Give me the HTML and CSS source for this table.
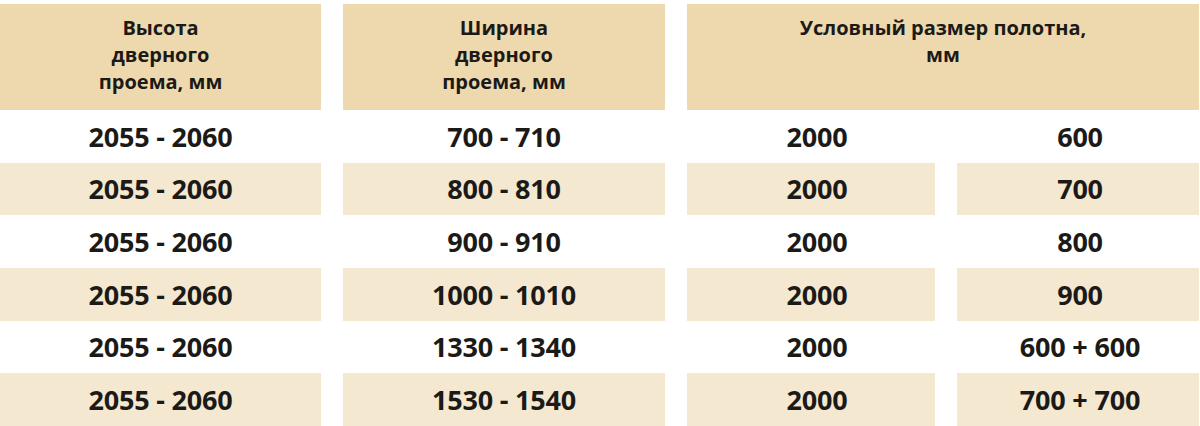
FILE: index.html
```html
<!DOCTYPE html>
<html lang="ru">
<head>
<meta charset="utf-8">
<title>Размеры дверных проемов</title>
<link rel="stylesheet" href="styles.css">
</head>
<body>
<div class="table">
  <div class="head c1">Высота<br>дверного<br>проема, мм</div>
  <div class="head c2">Ширина<br>дверного<br>проема, мм</div>
  <div class="head c3">Условный размер полотна,<br>мм</div>

  <div class="cell">2055 - 2060</div><div class="cell">700 - 710</div><div class="cell n3a">2000</div><div class="cell n3b">600</div>
  <div class="cell alt">2055 - 2060</div><div class="cell alt">800 - 810</div><div class="cell alt n3a">2000</div><div class="cell alt n3b">700</div>
  <div class="cell">2055 - 2060</div><div class="cell">900 - 910</div><div class="cell n3a">2000</div><div class="cell n3b">800</div>
  <div class="cell alt">2055 - 2060</div><div class="cell alt">1000 - 1010</div><div class="cell alt n3a">2000</div><div class="cell alt n3b">900</div>
  <div class="cell">2055 - 2060</div><div class="cell">1330 - 1340</div><div class="cell n3a">2000</div><div class="cell n3b">600 + 600</div>
  <div class="cell alt">2055 - 2060</div><div class="cell alt">1530 - 1540</div><div class="cell alt n3a">2000</div><div class="cell alt n3b">700 + 700</div>
</div>
</body>
</html>
```
FILE: styles.css
```css
html, body {
  margin: 0;
  padding: 0;
  background: #ffffff;
}
body {
  padding-top: 4px;
  font-family: "Open Sans", "Noto Sans", "DejaVu Sans", sans-serif;
  color: #1c1a17;
  font-weight: 700;
}
.table {
  display: grid;
  width: 1199px;
  height: 422px;
  grid-template-columns: 321px 322px 248px 1fr;
  grid-template-rows: 106px repeat(6, 1fr);
  column-gap: 22px;
}
.head {
  background: #eed8ae;
  font-size: 20px;
  line-height: 27px;
  text-align: center;
  padding-top: 10px;
  box-sizing: border-box;
}
.c3 {
  grid-column: 3 / 5;
}
.cell {
  display: flex;
  align-items: center;
  justify-content: center;
  font-size: 27px;
  letter-spacing: -0.2px;
}
.alt {
  background: #f4e8d1;
}
.n3a {
  padding-left: 12px;
}
.n3b {
  padding-left: 4px;
}
```
